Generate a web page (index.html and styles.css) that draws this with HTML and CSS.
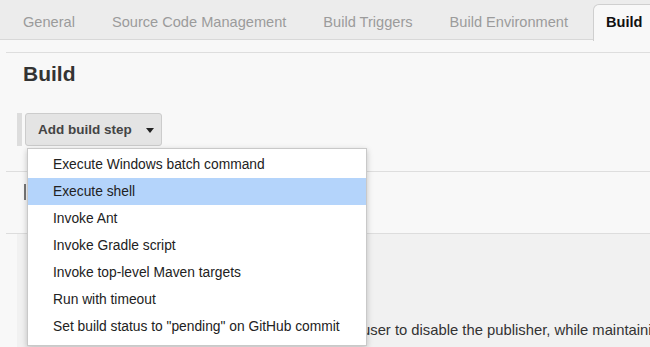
FILE: index.html
```html
<!DOCTYPE html>
<html>
  <head>
    <title>Job configuration - Build</title>
    <link rel="stylesheet" href="styles.css">
  </head>
  <body>
    <nav class="tabs">
      <a class="tab">General</a>
      <a class="tab">Source Code Management</a>
      <a class="tab">Build Triggers</a>
      <a class="tab">Build Environment</a>
      <a class="tab active">Build</a>
    </nav>

    <section class="config">
      <h1>Build</h1>

      <div class="step-row">
        <span class="bar"></span>
        <button class="add-step">Add build step <span class="caret"></span></button>
      </div>

      <div class="step-head">
        <span class="mark"></span>
      </div>

      <div class="step-body">
        <span class="bar"></span>
        <p class="help">user to disable the publisher, while maintaining the settings</p>
      </div>

      <ul class="menu">
        <li>Execute Windows batch command</li>
        <li class="hover">Execute shell</li>
        <li>Invoke Ant</li>
        <li>Invoke Gradle script</li>
        <li>Invoke top-level Maven targets</li>
        <li>Run with timeout</li>
        <li>Set build status to "pending" on GitHub commit</li>
      </ul>
    </section>
  </body>
</html>
```

FILE: styles.css
```css
body{
  margin:0;
  background:#f8f8f8;
  font-family:"Liberation Sans", Arial, sans-serif;
  color:#333;
  overflow:hidden;
}
.tabs{
  display:flex;
  gap:13px;
  height:39px;
  padding-left:11px;
  background:#ececec;
  border-bottom:1px solid #d8d8d8;
}
.tab{
  margin-top:4px;
  height:35px;
  line-height:36px;
  padding:0 12px;
  font-size:14.6px;
  color:#9b9b9b;
  white-space:nowrap;
}
.tab.active{
  height:36px;
  line-height:35px;
  border:1px solid #cfcfcf;
  border-bottom:none;
  border-radius:6px 0 0 0;
  background:#f8f8f8;
  color:#111;
  font-weight:bold;
}
.config{
  position:relative;
  margin-top:12px;
  margin-left:6px;
  border-top:1px solid #dedede;
  height:300px;
}
h1{
  margin:0;
  padding:8px 0 0 17px;
  font-size:21px;
  line-height:25px;
  color:#333;
}
.step-row{
  display:flex;
  gap:3px;
  margin:27px 0 0 11px;
}
.bar{
  width:5px;
  background:#dddddd;
}
.add-step{
  height:33px;
  padding:0 7px 0 12px;
  border:1px solid #cccccc;
  border-radius:3px;
  background:#e4e4e4;
  font-family:inherit;
  font-size:13.5px;
  font-weight:bold;
  color:#444;
}
.caret{
  display:inline-block;
  margin-left:10px;
  vertical-align:middle;
  border-top:5px solid #222;
  border-left:4px solid transparent;
  border-right:4px solid transparent;
}
.step-head{
  margin-top:25px;
  height:61px;
  border-top:1px solid #dedede;
  border-bottom:1px solid #dddddd;
}
.mark{
  display:block;
  width:2px;
  height:16px;
  margin:12px 0 0 18px;
  background:#777;
}
.step-body{
  display:flex;
  height:120px;
  margin-left:11px;
  background:#f1f1f1;
  overflow:hidden;
}
.step-body .bar{
  width:6px;
  background:#e0e0e0;
}
.help{
  margin:88px 0 0 345px;
  font-size:14.8px;
  color:#333;
  white-space:nowrap;
}
.menu{
  position:absolute;
  left:21px;
  top:95px;
  width:338px;
  margin:0;
  padding:2px 0 5px;
  list-style:none;
  background:#fff;
  border:1px solid #c9c9c9;
  box-shadow:0 2px 6px rgba(0,0,0,0.22);
}
.menu li{
  height:27px;
  line-height:28px;
  padding-left:25px;
  font-size:13.8px;
  color:#222;
}
.menu li.hover{
  background:#b4d4fb;
}
```
